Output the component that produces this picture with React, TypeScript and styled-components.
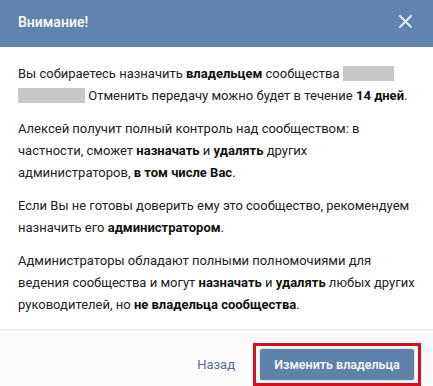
import React from "react";
import styled, { createGlobalStyle } from "styled-components";

const Global = createGlobalStyle`
  html, body { margin: 0; padding: 0; background: #ffffff; }
  body { font-family: Roboto, "Open Sans", Arial, sans-serif; -webkit-font-smoothing: antialiased; }
`;

const Box = styled.div`
  width: 433px;
  height: 386px;
  background: #ffffff;
  display: flex;
  flex-direction: column;
  overflow: hidden;
`;

const Header = styled.div`
  height: 47px;
  flex: none;
  background: #6084ad;
  display: flex;
  align-items: center;
  justify-content: space-between;
  padding: 0 18px 4px 18px;
  box-sizing: border-box;
`;

const Title = styled.div`
  color: #ffffff;
  font-size: 14px;
  font-weight: 500;
`;

const Close = styled.button`
  border: 0;
  background: transparent;
  padding: 0;
  width: 16px;
  height: 16px;
  display: flex;
  align-items: center;
  justify-content: center;
  cursor: pointer;
  margin-right: 2px;
`;

const Body = styled.div`
  flex: 1;
  padding: 16px 12px 0 18px;
  color: #222222;
  font-size: 13px;
  line-height: 22px;
`;

const Para = styled.p`
  margin: 0 0 11px 0;
`;

const B = styled.b`
  font-weight: 700;
  color: #111;
`;

const Redacted = styled.span<{ $w: number }>`
  display: inline-block;
  width: ${(p) => p.$w}px;
  height: 15px;
  background: #c8c8c8;
  vertical-align: -3px;
`;

const Footer = styled.div`
  height: 57px;
  flex: none;
  border-top: 1px solid #e4e6ea;
  background: #fbfbfb;
  display: flex;
  align-items: flex-start;
  justify-content: flex-end;
  padding: 13px 12px 0 0;
  gap: 18px;
  box-sizing: border-box;
`;

const Back = styled.button`
  border: 0;
  background: transparent;
  color: #5a6e87;
  font-family: inherit;
  font-size: 13px;
  padding: 0;
  height: 43px;
  line-height: 43px;
`;

const Highlight = styled.div`
  border: 3px solid #d9101c;
  padding: 3px 4px;
`;

const Primary = styled.button`
  display: block;
  border: 0;
  border-radius: 2px;
  background: #5e82aa;
  color: #ffffff;
  font-family: inherit;
  font-size: 12.5px;
  font-weight: 500;
  height: 31px;
  width: 154px;
  padding: 0;
  box-shadow: 0 0 2px rgba(0, 0, 0, 0.35);
`;

export default function App() {
  return (
    <>
      <Global />
      <Box>
        <Header>
          <Title>Внимание!</Title>
          <Close aria-label="Закрыть">
            <svg width="13" height="13" viewBox="0 0 13 13">
              <path d="M1 1 L12 12 M12 1 L1 12" stroke="#e8eef6" strokeWidth="1.8" strokeLinecap="round" />
            </svg>
          </Close>
        </Header>
        <Body>
          <Para>
            Вы собираетесь назначить <B>владельцем</B> сообщества <Redacted $w={51} />
            <br />
            <Redacted $w={67} /> Отменить передачу можно будет в течение <B>14 дней</B>.
          </Para>
          <Para>
            Алексей получит полный контроль над сообществом: в<br />
            частности, сможет <B>назначать</B> и <B>удалять</B> других
            <br />
            администраторов, <B>в том числе Вас</B>.
          </Para>
          <Para>
            Если Вы не готовы доверить ему это сообщество, рекомендуем
            <br />
            назначить его <B>администратором</B>.
          </Para>
          <Para>
            Администраторы обладают полными полномочиями для
            <br />
            ведения сообщества и могут <B>назначать</B> и <B>удалять</B> любых других
            <br />
            руководителей, но <B>не владельца сообщества</B>.
          </Para>
        </Body>
        <Footer>
          <Back>Назад</Back>
          <Highlight>
            <Primary>Изменить владельца</Primary>
          </Highlight>
        </Footer>
      </Box>
    </>
  );
}
